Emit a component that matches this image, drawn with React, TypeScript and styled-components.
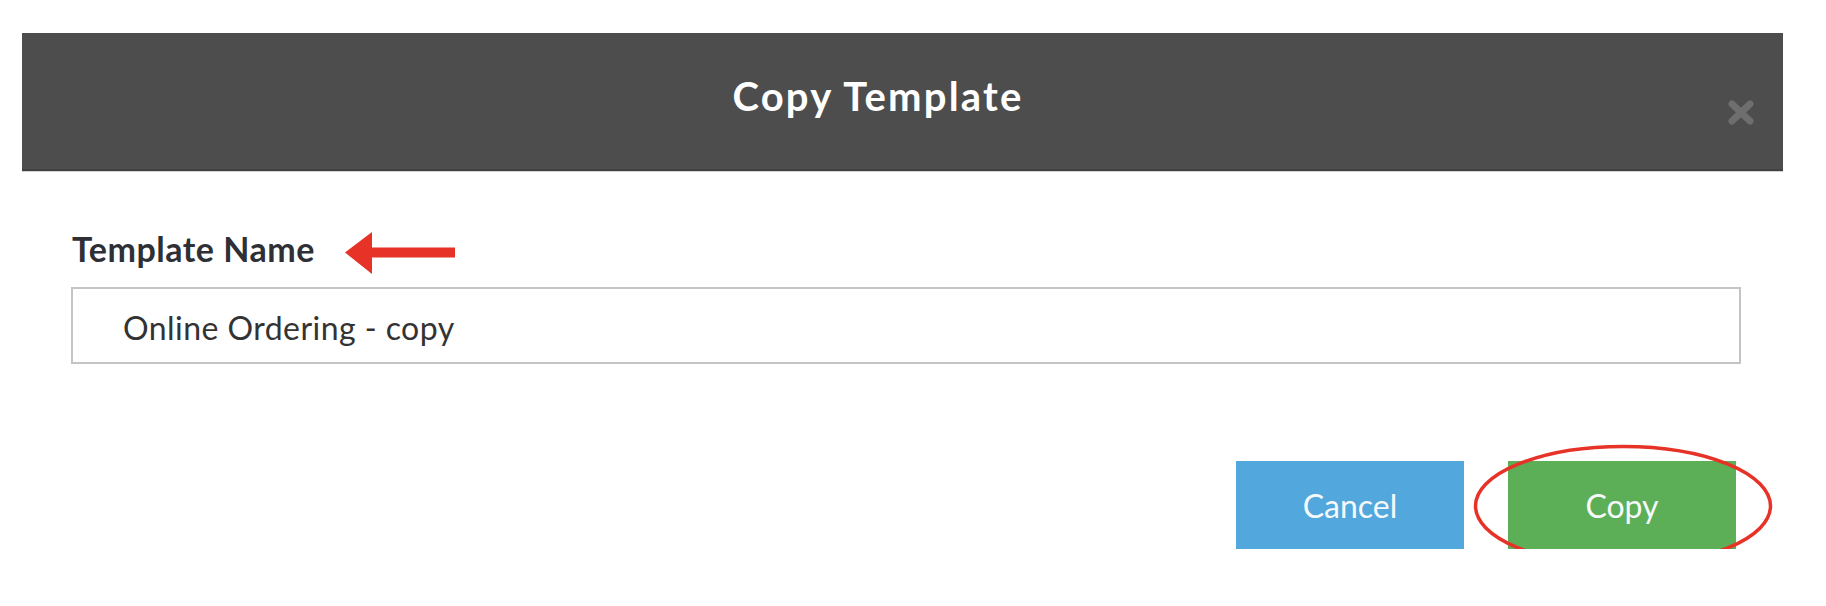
import React from "react";
import styled, { createGlobalStyle } from "styled-components";

const GlobalStyle = createGlobalStyle`
  html, body {
    margin: 0;
    padding: 0;
    background: #ffffff;
  }
  body {
    font-family: "Lato", "Liberation Sans", sans-serif;
  }
`;

const Page = styled.div`
  padding: 33px 0 0 22px;
`;

const Dialog = styled.div`
  width: 1761px;
  background: #ffffff;
`;

const Header = styled.div`
  display: grid;
  grid-template-columns: 1fr 56px;
  height: 138px;
  box-sizing: border-box;
  background: #4d4d4d;
  border-bottom: 2px solid #414141;
  box-shadow: 0 1px 0 #d2d2d2;
`;

const Title = styled.h1`
  margin: 0;
  padding: 43px 0 0 7px;
  font-size: 40px;
  line-height: 1;
  font-weight: 700;
  letter-spacing: 2.2px;
  color: #ffffff;
  text-align: center;
`;

const CloseButton = styled.button`
  align-self: start;
  justify-self: start;
  margin-top: 66px;
  padding: 0;
  width: 28px;
  height: 27px;
  border: 0;
  background: transparent;
  cursor: pointer;
  line-height: 0;
`;

const Body = styled.div`
  padding: 61px 42px 0 49px;
`;

const LabelRow = styled.div`
  display: flex;
  align-items: flex-start;
  gap: 30px;
  height: 42px;
  margin-bottom: 13px;
  padding-left: 1px;
`;

const Label = styled.label`
  font-size: 34px;
  line-height: 1;
  font-weight: 700;
  letter-spacing: 0.5px;
  color: #2e3035;
`;

const NameInput = styled.input`
  display: block;
  width: 100%;
  height: 77px;
  box-sizing: border-box;
  border: 2px solid #c4c4c4;
  padding: 4px 0 0 50px;
  font-family: "Lato", "Liberation Sans", sans-serif;
  font-size: 32px;
  letter-spacing: 0.45px;
  color: #333333;
  outline: none;
`;

const Footer = styled.div`
  display: flex;
  justify-content: flex-end;
  gap: 44px;
  margin-top: 97px;
  padding-right: 47px;
`;

const ButtonWrap = styled.div`
  position: relative;
`;

const ActionButton = styled.button<{ $tone: "blue" | "green" }>`
  display: block;
  width: 228px;
  height: 88px;
  border: 0;
  padding: 0;
  font-family: "Lato", "Liberation Sans", sans-serif;
  font-size: 32px;
  font-weight: 400;
  color: #f6f9fb;
  background: ${(p) => (p.$tone === "blue" ? "#52a7dc" : "#5caf56")};
  cursor: pointer;
`;

const Ring = styled.svg`
  position: absolute;
  left: -34px;
  top: -16px;
  pointer-events: none;
  overflow: visible;
`;

const CloseIcon = () => (
  <svg width="28" height="27" viewBox="0 0 28 27">
    <path
      d="M5 5 L23 22 M23 5 L5 22"
      stroke="#6e6e6e"
      strokeWidth="7"
      strokeLinecap="round"
      fill="none"
    />
  </svg>
);

const PointerArrow = () => (
  <svg width="110" height="42" viewBox="0 0 110 42">
    <polygon points="0,20.5 27,0 27,15.5 110,15.5 110,25.5 27,25.5 27,42" fill="#e63227" />
  </svg>
);

export default function App() {
  return (
    <>
      <GlobalStyle />
      <Page>
        <Dialog>
          <Header>
            <Title>Copy Template</Title>
            <CloseButton aria-label="Close">
              <CloseIcon />
            </CloseButton>
          </Header>
          <Body>
            <LabelRow>
              <Label htmlFor="template-name">Template Name</Label>
              <PointerArrow />
            </LabelRow>
            <NameInput id="template-name" defaultValue="Online Ordering - copy" readOnly />
          </Body>
          <Footer>
            <ButtonWrap>
              <ActionButton $tone="blue">Cancel</ActionButton>
            </ButtonWrap>
            <ButtonWrap>
              <ActionButton $tone="green">Copy</ActionButton>
              <Ring width="298" height="122" viewBox="0 0 298 122">
                <ellipse cx="149" cy="61" rx="147.5" ry="59.5" fill="none" stroke="#e63227" strokeWidth="3.5" />
              </Ring>
            </ButtonWrap>
          </Footer>
        </Dialog>
      </Page>
    </>
  );
}
